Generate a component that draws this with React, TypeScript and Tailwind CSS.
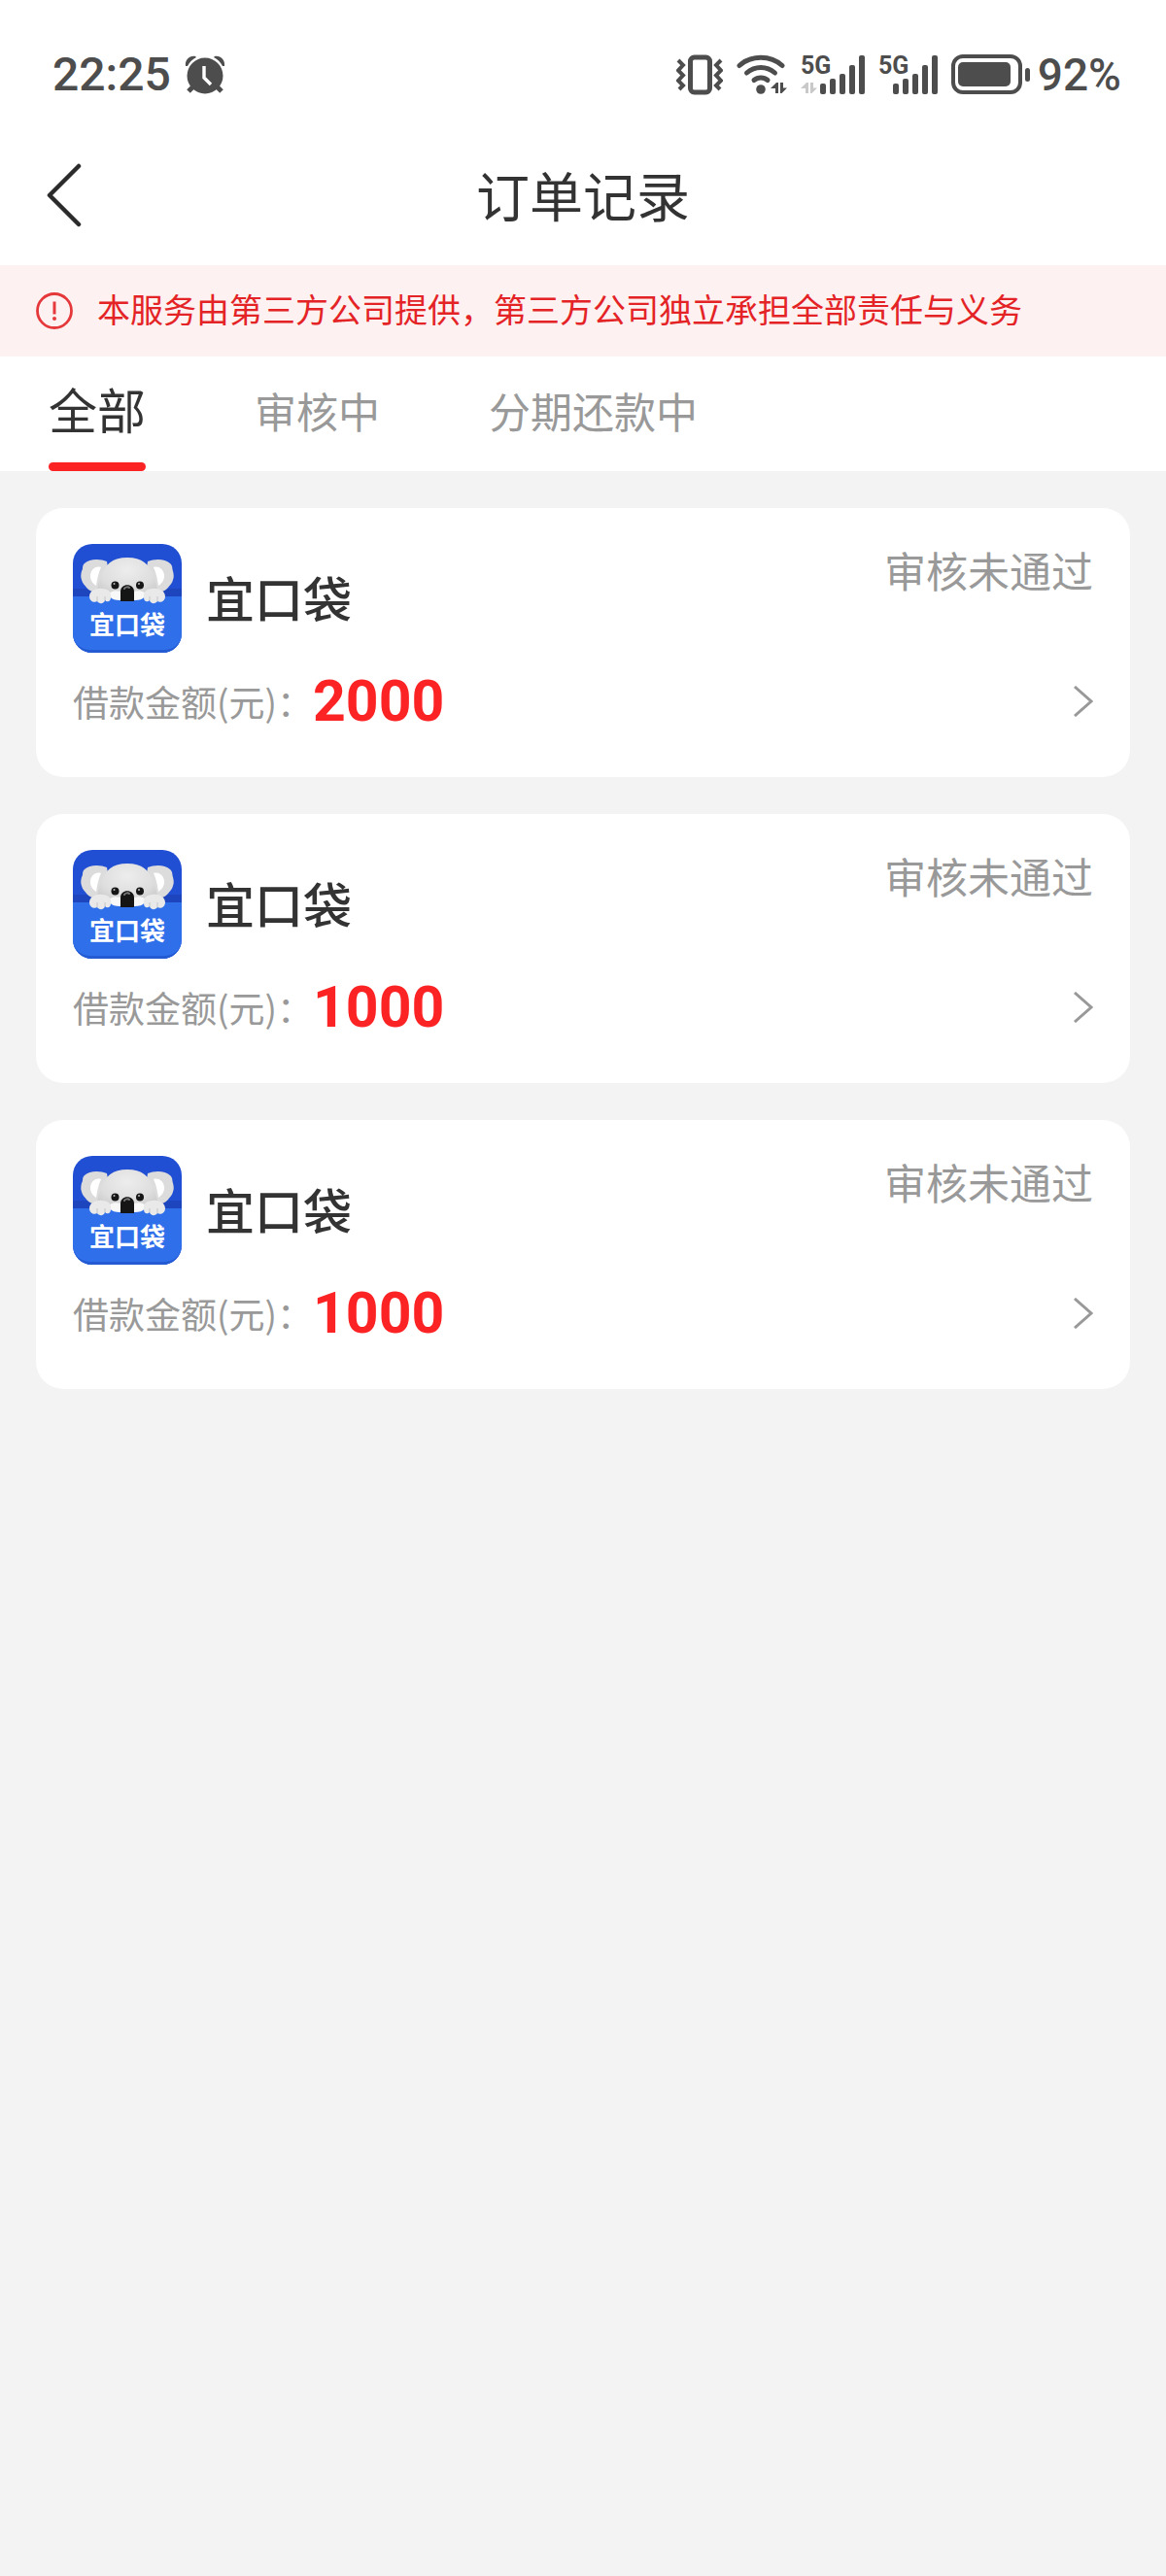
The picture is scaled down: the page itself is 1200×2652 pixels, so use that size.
import React, { useState } from 'react';

interface Order {
  id: number;
  name: string;
  amount: number;
  status: string;
}

const TABS = ['全部', '审核中', '分期还款中'];

const ORDERS: Order[] = [
  { id: 1, name: '宜口袋', amount: 2000, status: '审核未通过' },
  { id: 2, name: '宜口袋', amount: 1000, status: '审核未通过' },
  { id: 3, name: '宜口袋', amount: 1000, status: '审核未通过' },
];

const AlarmIcon: React.FC = () => (
  <svg width="42" height="40" viewBox="0 0 42 40" fill="currentColor" aria-hidden="true">
    <path d="M1 11C0 5 5 0 11 1L12 2C8 4 5 7 3 11ZM41 11C42 5 37 0 31 1L30 2C34 4 37 7 39 11Z" />
    <path d="M8 33 4 37M34 33l4 4" stroke="currentColor" strokeWidth="5" />
    <circle cx="21" cy="21" r="18.5" />
    <path d="M20 11v12l7 7" fill="none" stroke="#fff" strokeWidth="3.4" />
  </svg>
);

const VibrateIcon: React.FC = () => (
  <svg width="48" height="42" viewBox="0 0 48 42" fill="none" stroke="currentColor" aria-hidden="true">
    <rect x="14.5" y="3" width="20" height="36" rx="4" strokeWidth="5" />
    <path
      d="M2 6l5 5-5 5.500 5 5-5 5.500 5 5-4 4M46 6l-5 5 5 5.500-5 5 5 5.500-5 5 4 4"
      strokeWidth="4"
    />
  </svg>
);

const WifiIcon: React.FC = () => (
  <svg width="52" height="42" viewBox="0 0 52 42" fill="none" stroke="currentColor" aria-hidden="true">
    <g strokeWidth="5" strokeLinecap="round">
      <path d="M3 11.500C15 .5 35 .5 47 11.500" />
      <path d="M10.500 19C19 11.500 31 11.500 39.500 19" />
      <path d="M18 26.500c4-3.500 10-3.500 14 0" />
    </g>
    <circle cx="25" cy="36" r="4.800" fill="currentColor" stroke="none" />
    <path d="M35 35l6-6h2v11h-3v-5zM45 29h3v5.500h4L46.500 40H45z" fill="currentColor" stroke="none" />
  </svg>
);

const SignalIcon: React.FC<{ idle?: boolean }> = ({ idle }) => (
  <svg
    width={idle ? 66 : 61}
    height="54"
    viewBox={idle ? '0 -6 66 54' : '5 -6 61 54'}
    fill="currentColor"
    aria-hidden="true"
  >
    <text x={idle ? 0 : 5} y="20" className="font-['Roboto',sans-serif] text-[25px] font-bold">
      5G
    </text>
    {idle && <path d="M0 35l6-6h2v11H5v-5zM10 29h3v5.500h4L11.500 40H10z" className="text-[#c9c9c9]" />}
    <rect x="20" y="30" width="6" height="11" rx="2" />
    <rect x="30" y="25" width="6" height="16" rx="2" />
    <rect x="40" y="20" width="6" height="21" rx="2" />
    <rect x="50" y="11" width="6" height="30" rx="2" />
    <rect x="60" y="1" width="6" height="40" rx="2" />
  </svg>
);

const BatteryIcon: React.FC = () => (
  <svg width="81" height="42" viewBox="0 0 81 42" fill="currentColor" aria-hidden="true">
    <rect x="2" y="2" width="69" height="37" rx="10" fill="none" stroke="currentColor" strokeWidth="4" />
    <rect x="7" y="8" width="54" height="25" rx="5" />
    <rect x="76" y="14" width="5" height="14" rx="2.500" />
  </svg>
);

const KoalaLogo: React.FC = () => (
  <svg viewBox="0 0 112 112" className="size-28 shrink-0 rounded-[20px]" role="img" aria-label="宜口袋">
    <defs>
      <radialGradient id="fur" cx="50%" cy="30%" r="75%">
        <stop offset="0" stopColor="#ededed" />
        <stop offset="0.6" stopColor="#dedede" />
        <stop offset="1" stopColor="#c6c6c8" />
      </radialGradient>
    </defs>
    <rect width="112" height="112" fill="#214fd4" />
    <rect y="46" width="112" height="10" fill="#1d45bd" />
    <path
      d="M35 18C28 15 17 15 12 20c-3 3-1 5-3 8-1 4-1 6 0 9 1 4 3 5 6 9 3 3 9 5 14 3l10-6zM77 18c7-3 18-3 23 2 3 3 2 5 3 8 1 4 1 6 0 9-1 4-3 5-6 9-3 3-9 5-14 3l-10-6z"
      fill="#dcdcdd"
    />
    <path d="M29 24c-6-2-11 3-11 9 0 5 3 8 6 10 1-6 2-13 5-19zM83 24c6-2 11 3 11 9 0 5-3 8-6 10-1-6-2-13-5-19z" fill="#fff" />
    <path d="M27 57c-3-5-2-15 2-24 4-12 12-19 27-19s23 7 27 19c4 9 5 19 2 24z" fill="url(#fur)" />
    <path d="M38 50c4-2 7-2 11-1h14c4-1 7-1 11 1v9H38z" fill="#f8f8f8" />
    <path d="M0 54h38c2 3 6 4 10 4h16c4 0 8-1 10-4h38v58H0z" fill="#2f6fe9" />
    <path d="M0 96c3 8 9 13 18 13h76c9 0 15-5 18-13v16H0z" fill="#245bd2" />
    <path d="M49 59V49c0-9 14-9 14 0v10z" fill="#151515" />
    <path d="M53 46c1-2 4-2 5-1" stroke="#777" strokeWidth="2" fill="none" strokeLinecap="round" />
    <circle cx="43.500" cy="42.500" r="4" fill="#171717" />
    <circle cx="69" cy="42.500" r="4" fill="#171717" />
    <circle cx="42.500" cy="41" r="1" fill="#bbb" />
    <circle cx="68" cy="41" r="1" fill="#bbb" />
    <path
      d="M17 54c0-5 6-9 13-8 7 0 10 4 9 9 0 5-4 5-6 3-1 4-6 4-8 1-3 2-8 0-8-5zM95 54c0-5-6-9-13-8-7 0-10 4-9 9 0 5 4 5 6 3 1 4 6 4 8 1 3 2 8 0 8-5z"
      fill="#e9e9e9"
    />
    <path d="M25 54v5M33 54v4M79 54v4M87 54v5" stroke="#c4c4c8" strokeWidth="1" />
    <text x="17" y="93" fill="#fff" className="text-[26px] font-bold">
      宜口袋
    </text>
  </svg>
);

const StatusBar: React.FC = () => (
  <div className="flex h-32 items-center justify-between bg-white pt-[26px] pr-[46px] pl-[54px] font-['Roboto',sans-serif] text-[48px] leading-none font-medium text-[#4d4d4d]">
    <div className="flex items-center gap-[14px]">
      <span>22:25</span>
      <AlarmIcon />
    </div>
    <div className="flex items-center">
      <div className="flex items-center gap-[14px] pr-2">
        <VibrateIcon />
        <WifiIcon />
        <SignalIcon idle />
        <SignalIcon />
        <BatteryIcon />
      </div>
      <span className="text-[46px]">92%</span>
    </div>
  </div>
);

const OrderCard: React.FC<{ order: Order }> = ({ order }) => (
  <a href="#" className="block rounded-[28px] bg-white px-[38px] py-[37px]">
    <div className="flex items-start justify-between">
      <div className="flex items-center gap-[25px]">
        <KoalaLogo />
        <h2 className="pb-1 text-[50px] leading-[60px] font-medium text-[#333]">{order.name}</h2>
      </div>
      <span className="text-[43px] leading-[52px] text-[#999]">{order.status}</span>
    </div>
    <div className="mt-2 flex h-[83px] items-center">
      <span className="text-[37px] leading-[52px] text-[#999]">借款金额(元)：</span>
      <span className="font-['Roboto',sans-serif] text-[59px] leading-[60px] font-bold text-[#fc2325]">
        {order.amount}
      </span>
      <svg width="20" height="32" viewBox="0 0 20 32" className="ml-auto" fill="none" aria-hidden="true">
        <path d="M1 1l17 15L1 31" stroke="#999" strokeWidth="3" />
      </svg>
    </div>
  </a>
);

const App: React.FC = () => {
  const [activeTab, setActiveTab] = useState(TABS[0]);

  return (
    <div className="min-h-screen bg-[#f3f3f3] font-['Noto_Sans_CJK_SC',sans-serif]">
      <StatusBar />

      <header className="grid h-[145px] grid-cols-[1fr_auto_1fr] items-center bg-white px-12">
        <button type="button" aria-label="返回" className="justify-self-start">
          <svg width="36" height="66" viewBox="0 0 36 66" fill="none" aria-hidden="true">
            <path
              d="M33 3L3 33l30 30"
              stroke="#2b2b2b"
              strokeWidth="4.500"
              strokeLinecap="round"
              strokeLinejoin="round"
            />
          </svg>
        </button>
        <h1 className="pb-1 text-[55px] leading-[60px] text-[#333]">订单记录</h1>
      </header>

      <div className="flex h-[94px] items-center gap-[25px] bg-[#fdf1f1] px-[37px]">
        <svg width="38" height="38" viewBox="0 0 38 38" fill="none" aria-hidden="true">
          <circle cx="19" cy="19" r="17.500" stroke="#e5383b" strokeWidth="2.800" />
          <path d="M19 9.500v13" stroke="#e5383b" strokeWidth="3" />
          <circle cx="19" cy="27" r="2" fill="#e5383b" />
        </svg>
        <p className="pb-1 text-[34px] leading-[52px] text-[#e42326]">
          本服务由第三方公司提供，第三方公司独立承担全部责任与义务
        </p>
      </div>

      <nav className="flex gap-28 bg-white px-[50px]">
        {TABS.map((tab) => {
          const active = tab === activeTab;
          return (
            <button key={tab} type="button" onClick={() => setActiveTab(tab)} className="flex h-[118px] flex-col">
              <span
                className={
                  active
                    ? 'flex flex-1 items-center pb-1 text-[50px] leading-[60px] text-[#333]'
                    : 'flex flex-1 items-center text-[43px] leading-[52px] text-[#999]'
                }
              >
                {tab}
              </span>
              <span className={active ? 'h-[9px] w-full rounded-full bg-[#fc2325]' : 'h-[9px] w-full'} />
            </button>
          );
        })}
      </nav>

      <main className="flex flex-col gap-[38px] px-[37px] py-[38px]">
        {ORDERS.map((order) => (
          <OrderCard key={order.id} order={order} />
        ))}
      </main>
    </div>
  );
};

export default App;
